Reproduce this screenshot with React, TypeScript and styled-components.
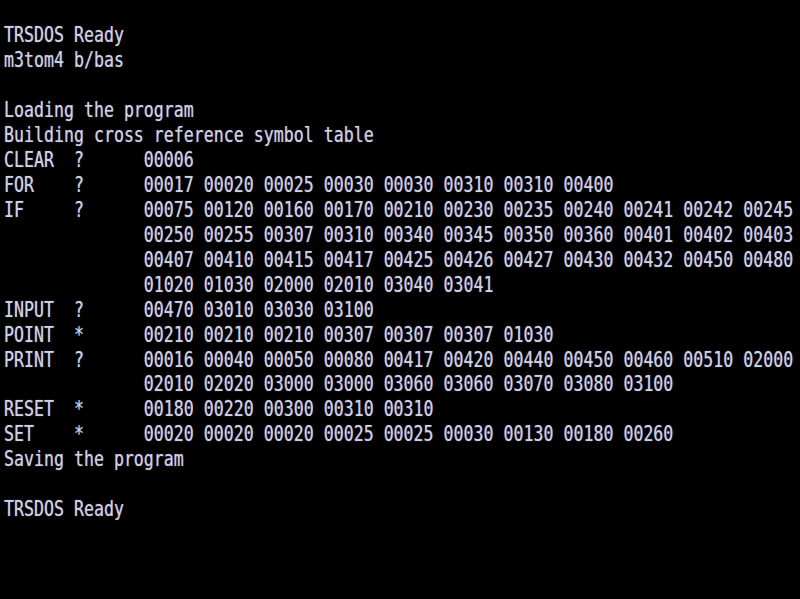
import React from "react";
import styled, { createGlobalStyle } from "styled-components";

const Global = createGlobalStyle`
  html, body { margin: 0; padding: 0; background: #000; }
  body { width: 800px; height: 599px; overflow: hidden; }
`;

const Screen = styled.div`
  width: 800px;
  height: 599px;
  background: #000;
  padding-left: 4px;
  box-sizing: border-box;
  display: flex;
  flex-direction: column;
`;

const Row = styled.div`
  height: 24.96px;
  flex: 0 0 24.96px;
  display: flex;
  align-items: center;
`;

const Text = styled.span`
  display: inline-block;
  font-family: "DejaVu Sans Mono", monospace;
  font-size: 16.6px;
  line-height: 1;
  white-space: pre;
  color: #d0d0ea;
  transform: scale(1, 1.3) translateY(-1px);
  transform-origin: left center;
  text-shadow: 0 0 1px rgba(208, 208, 234, 0.6);
`;

const lines: string[] = [
  "",
  "TRSDOS Ready",
  "m3tom4 b/bas",
  "",
  "Loading the program",
  "Building cross reference symbol table",
  "CLEAR  ?      00006",
  "FOR    ?      00017 00020 00025 00030 00030 00310 00310 00400",
  "IF     ?      00075 00120 00160 00170 00210 00230 00235 00240 00241 00242 00245",
  "              00250 00255 00307 00310 00340 00345 00350 00360 00401 00402 00403",
  "              00407 00410 00415 00417 00425 00426 00427 00430 00432 00450 00480",
  "              01020 01030 02000 02010 03040 03041",
  "INPUT  ?      00470 03010 03030 03100",
  "POINT  *      00210 00210 00210 00307 00307 00307 01030",
  "PRINT  ?      00016 00040 00050 00080 00417 00420 00440 00450 00460 00510 02000",
  "              02010 02020 03000 03000 03060 03060 03070 03080 03100",
  "RESET  *      00180 00220 00300 00310 00310",
  "SET    *      00020 00020 00020 00025 00025 00030 00130 00180 00260",
  "Saving the program",
  "",
  "TRSDOS Ready",
];

export default function App() {
  return (
    <>
      <Global />
      <Screen>
        {lines.map((l, i) => (
          <Row key={i}>
            <Text>{l || " "}</Text>
          </Row>
        ))}
      </Screen>
    </>
  );
}
